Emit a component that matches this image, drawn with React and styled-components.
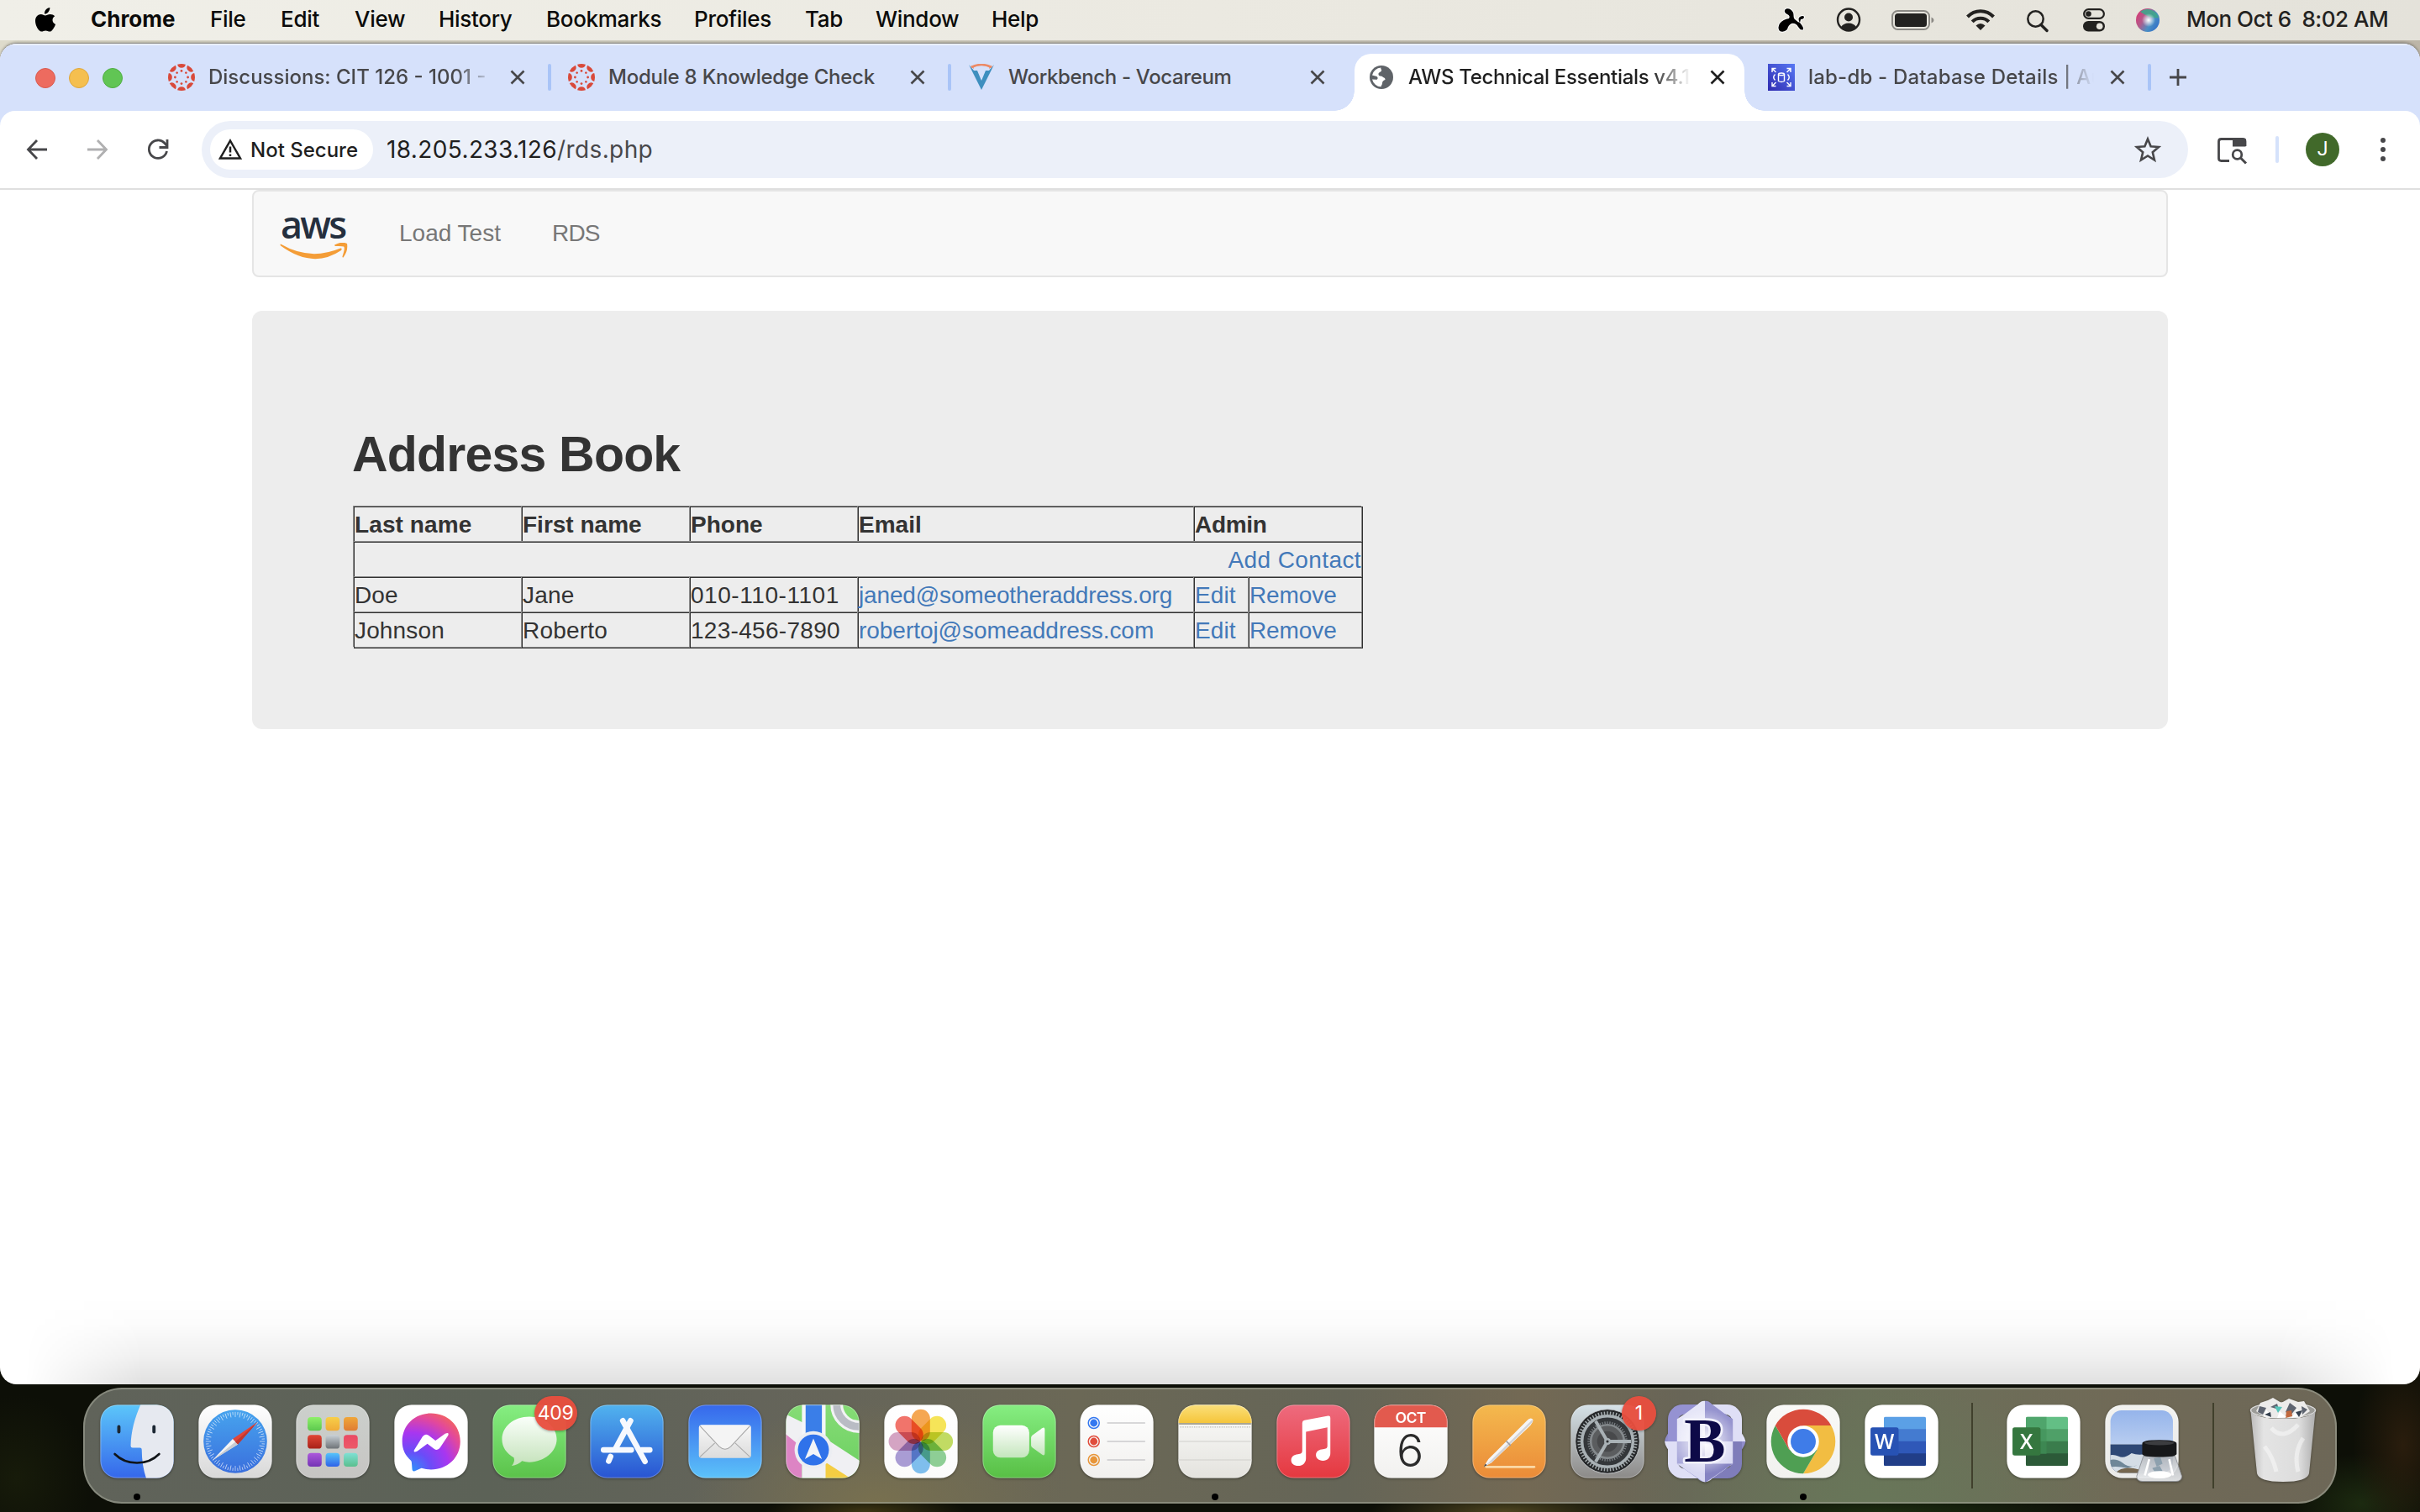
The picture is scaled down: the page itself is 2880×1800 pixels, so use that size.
import React from 'react';
import styled, { createGlobalStyle, css } from 'styled-components';

const Global = createGlobalStyle`
  * { box-sizing: border-box; }
  body { margin: 0; background: #0e0f08; overflow: hidden; }
`;

const ui = '"Inter", "Roboto", sans-serif';
const web = '"Liberation Sans", Arial, sans-serif';

const Screen = styled.div`
  width: 2880px;
  height: 1800px;
  display: flex;
  flex-direction: column;
  overflow: hidden;
  background:
    radial-gradient(ellipse 160px 24px at 1790px 1799px, #4d4420 0, transparent 100%),
    radial-gradient(ellipse 120px 20px at 1030px 1799px, #3c3413 0, transparent 100%),
    radial-gradient(ellipse 260px 24px at 2240px 1800px, #1c2c10 0, transparent 100%),
    radial-gradient(ellipse 60px 110px at 2860px 1720px, #2a1d0d 0, transparent 100%),
    radial-gradient(ellipse 90px 60px at 2810px 1790px, #1c2a10 0, transparent 100%),
    radial-gradient(ellipse 90px 100px at 20px 1760px, #171b0a 0, transparent 100%),
    linear-gradient(90deg, #dedbcb 0, #ccc8ba 50%, #bdb6a8 100%) 0 0 / 100% 90px no-repeat,
    #0d0f07;
  font-family: ${ui};
`;

/* ---------- menu bar ---------- */
const MenuBar = styled.header`
  flex: none;
  height: 48px;
  display: flex;
  align-items: center;
  justify-content: space-between;
  padding: 0 37px 0 40px;
  background: linear-gradient(90deg, #f0efe8, #ebe9e1 50%, #e4e2da);
`;
const MenuGroup = styled.nav`
  display: flex;
  align-items: center;
  height: 48px;
`;
const AppleMark = styled.svg`
  width: 28px;
  height: 32px;
  margin: 0 40px 2px 0;
`;
const MenuItem = styled.span`
  width: ${p => p.$w}px;
  height: 48px;
  margin-right: 42px;
  font-size: 26px;
  font-weight: ${p => (p.$bold ? 700 : 500)};
  letter-spacing: ${p => p.$ls || 0}px;
  line-height: 45px;
  white-space: nowrap;
  color: #0b0b0a;
`;
const StatusIcon = styled.svg`
  width: ${p => p.$w}px;
  height: 32px;
  margin-right: ${p => p.$mr}px;
  overflow: visible;
`;
const Clock = styled.span`
  width: 241px;
  height: 48px;
  font-size: 26px;
  font-weight: 500;
  line-height: 45px;
  letter-spacing: -0.5px;
  white-space: pre;
  color: #232220;
`;

/* ---------- browser window ---------- */
const Window = styled.main`
  position: relative;
  flex: none;
  height: 1596px;
  margin-top: 4px;
  display: flex;
  flex-direction: column;
  background: #fff;
  border-radius: 20px;
  overflow: hidden;
  box-shadow: 0 -1px 0 #96948f, 0 -2px 3px rgba(0, 0, 0, 0.25);
`;
const TabStrip = styled.div`
  flex: none;
  height: 98px;
  margin-bottom: -18px;
  padding: 12px 0 18px 42px;
  display: flex;
  background: #d6e1fb;
  box-shadow: inset 0 2px 0 #e9effc;
`;
const Lights = styled.div`
  display: flex;
  align-items: center;
  gap: 16px;
  height: 57px;
  margin-right: 38px;
`;
const Light = styled.i`
  width: 24px;
  height: 24px;
  border-radius: 50%;
  background: ${p => p.$c};
  border: 1px solid ${p => p.$b};
`;
const Tab = styled.div`
  position: relative;
  flex: none;
  width: 464px;
  height: 68px;
  padding: 0 16px 12px;
  display: flex;
  align-items: center;
  color: #47474a;
  ${p => p.$active && css`
    background: #fff;
    border-radius: 20px 20px 0 0;
    color: #1f1f1f;
    &::before, &::after {
      content: '';
      position: absolute;
      bottom: 0;
      width: 24px;
      height: 24px;
    }
    &::before {
      left: -24px;
      background: radial-gradient(circle at 0 0, transparent 23.5px, #fff 24px);
    }
    &::after {
      right: -24px;
      background: radial-gradient(circle at 100% 0, transparent 23.5px, #fff 24px);
    }
  `}
`;
const Favicon = styled.svg`
  flex: none;
  width: 32px;
  height: 32px;
  margin-right: 16px;
`;
const TabTitle = styled.span`
  flex: none;
  width: 352px;
  font-size: 24px;
  font-weight: 450;
  line-height: 40px;
  letter-spacing: ${p => p.$ls || 0}px;
  white-space: nowrap;
  ${p => p.$fade && css`
    mask-image: linear-gradient(90deg, #000 ${p.$fade - 46}px, transparent ${p.$fade}px);
  `}
`;
const CloseIcon = styled.svg`
  flex: none;
  width: 32px;
  height: 32px;
`;
const TabGap = styled.i`
  flex: none;
  width: 4px;
  height: 32px;
  margin: 12px 4px 0;
  border-radius: 2px;
  background: ${p => (p.$hidden ? 'transparent' : '#a9c4f7')};
`;
const NewTab = styled.svg`
  width: 32px;
  height: 32px;
  margin: 12px 0 0 12px;
`;
const Toolbar = styled.div`
  position: relative;
  flex: none;
  height: 94px;
  padding: 0 28px;
  display: flex;
  align-items: center;
  background: #fff;
  border-radius: 18px 18px 0 0;
  border-bottom: 2px solid #dfdfdf;
`;
const NavButtons = styled.div`
  display: flex;
  gap: 40px;
  margin-right: 36px;
`;
const Icon32 = styled.svg`
  flex: none;
  width: 32px;
  height: 32px;
`;
const Omnibox = styled.div`
  width: 2364px;
  height: 68px;
  padding: 0 30px 0 10px;
  display: flex;
  align-items: center;
  border-radius: 34px;
  background: #ecf0f9;
`;
const SecurityChip = styled.div`
  width: 194px;
  height: 48px;
  padding-left: 8px;
  display: flex;
  align-items: center;
  gap: 8px;
  border-radius: 24px;
  background: #fff;
  font-size: 24px;
  font-weight: 500;
  letter-spacing: 0;
  white-space: nowrap;
  color: #1f1f1f;
`;
const Url = styled.div`
  flex: 1;
  margin-left: 16px;
  font-size: 28px;
  letter-spacing: 0.38px;
  color: #1f1f1f;
  span { color: #47474a; }
`;
const StarIcon = styled.svg`
  width: 36px;
  height: 36px;
`;
const PanelIcon = styled.svg`
  width: 40px;
  height: 36px;
  margin-left: 33px;
`;
const ToolDivider = styled.i`
  width: 4px;
  height: 32px;
  margin: 0 32px 0 31px;
  border-radius: 2px;
  background: #d5e2fb;
`;
const Avatar = styled.div`
  width: 40px;
  height: 40px;
  border-radius: 50%;
  background: #41692a;
  color: #fff;
  font: 400 23px/40px "Roboto", sans-serif;
  text-align: center;
`;
const MoreIcon = styled.svg`
  width: 32px;
  height: 32px;
  margin-left: 36px;
`;

/* ---------- web page ---------- */
const Page = styled.div`
  flex: 1;
  width: 2280px;
  margin: 0 auto;
  font-family: ${web};
  font-size: 28px;
  color: #333;
`;
const Navbar = styled.nav`
  height: 104px;
  display: flex;
  align-items: center;
  border: 2px solid #e5e5e5;
  border-radius: 8px;
  background: #f8f8f8;
  padding-left: 31px;
`;
const AwsLogo = styled.div`
  width: 81px;
  height: 58px;
  margin: 4px 61px 0 0;
  display: flex;
  flex-direction: column;
  span {
    height: 38px;
    padding-left: 1px;
    font: 600 45px/32px "Open Sans", "Noto Sans", sans-serif;
    letter-spacing: -2.8px;
    color: #252f3e;
  }
  svg { width: 81px; height: 20px; }
`;
const NavLink = styled.a`
  width: ${p => p.$w}px;
  margin-right: 60px;
  white-space: nowrap;
  letter-spacing: ${p => p.$ls || 0}px;
  color: #777;
`;
const Jumbotron = styled.section`
  height: 498px;
  margin-top: 40px;
  padding: 138px 120px 0 119px;
  border-radius: 12px;
  background: #ededed;
`;
const Heading = styled.h1`
  margin: 0 0 62px;
  font-size: 59px;
  font-weight: 700;
  line-height: 66px;
  letter-spacing: -0.8px;
  height: 33px;
  color: #333;
`;
const Contacts = styled.div`
  width: 1201px;
  margin: 0 0 0 2px;
  display: grid;
  grid-template-columns: 200px 200px 200px 400px 65px 135px;
  grid-auto-rows: 42px;
  border-right: 1px solid #303030;
  border-bottom: 1px solid #303030;
  box-shadow: inset -1px -1px 0 #8b8b8b;
`;
const Cell = styled.div`
  grid-column: span ${p => p.$span || 1};
  border-top: 1px solid #303030;
  border-left: 1px solid #303030;
  box-shadow: -1px -1px 0 #8b8b8b;
  line-height: 42px;
  white-space: nowrap;
  font-weight: ${p => (p.$head ? 700 : 400)};
  text-align: ${p => (p.$right ? 'right' : 'left')};
  letter-spacing: ${p => p.$ls || 0}px;
  padding-right: 1px;
`;
const Link = styled.a`
  color: #4379b9;
`;
const DockShade = styled.div`
  position: absolute;
  left: 0;
  right: 0;
  bottom: 0;
  height: 104px;
  background: linear-gradient(180deg, rgba(0,0,0,0), rgba(0,0,0,0.012) 30%, rgba(0,0,0,0.06) 68%, rgba(0,0,0,0.12));
  mask-image: linear-gradient(90deg, transparent 30px, #000 170px, #000 2710px, transparent 2850px);
`;

/* ---------- dock ---------- */
const Dock = styled.footer`
  flex: none;
  width: 2682px;
  height: 138px;
  margin: 4px auto 0;
  padding: 18px 17px 0 18px;
  display: flex;
  gap: 28.65px;
  border: 2px solid rgba(160, 163, 148, 0.6);
  border-radius: 46px;
  background:
    radial-gradient(ellipse 300px 130px at 2130px 130px, #687659, transparent),
    radial-gradient(ellipse 220px 120px at 945px 138px, #78704f, transparent),
    linear-gradient(90deg, #60635a, #5c6257 18%, #64645a 30%, #6b6856 44%, #656557 56%, #736954 64%, #686557 71%, #6a7059 79%, #706a57 90%, #6d6757);
  background-origin: border-box;
`;
const DockItem = styled.div`
  position: relative;
  flex: none;
  width: ${p => p.$w || 88}px;
  height: 88px;
`;
const AppIcon = styled.svg`
  display: block;
  width: 100%;
  height: 100%;
  overflow: visible;
  filter: drop-shadow(0 1px 1.5px rgba(0, 0, 0, 0.35));
`;
const RunningDot = styled.i`
  position: absolute;
  left: 40px;
  top: 106px;
  width: 8px;
  height: 8px;
  border-radius: 50%;
  background: #000;
`;
const Badge = styled.span`
  position: absolute;
  top: -10px;
  left: ${p => p.$left}px;
  width: ${p => p.$w}px;
  height: 41px;
  border-radius: 21px;
  background: rgba(232, 78, 62, 0.96);
  box-shadow: 0 1px 3px rgba(0, 0, 0, 0.35);
  color: #fff;
  font-size: 23px;
  line-height: 41px;
  letter-spacing: -0.4px;
  text-align: center;
`;
const DockDivider = styled.i`
  flex: none;
  width: 2px;
  height: 102px;
  margin: -2px 11.3px 0;
  background: #40402c;
`;

/* ---------- favicons ---------- */
const CanvasFavicon = () => (
  <Favicon viewBox="-16 -16 32 32">
    {[0, 45, 90, 135, 180, 225, 270, 315].map(a => (
      <g key={a} transform={`rotate(${a})`} fill="#d9493a">
        <path d="M-4.9-15.2A16 16 0 0 1 4.9-15.2A5 5 0 0 1-4.9-15.2Z" />
        <circle cy="-7.6" r="1.4" />
      </g>
    ))}
  </Favicon>
);
const VocareumFavicon = () => (
  <Favicon viewBox="0 0 32 32">
    <path d="M1 1 16 31 31 1 25 8 21 8 16 20 11 8 7 8Z" fill="#3e8fbf" />
    <path d="M4 4Q16-2 28 4" fill="none" stroke="#ec8a66" strokeWidth="2.6" />
    <path d="M3 3l3-1 1 4zM29 3l-3-1-1 4z" fill="#ec8a66" />
  </Favicon>
);
const GlobeFavicon = () => (
  <Favicon viewBox="0 0 32 32">
    <circle cx="16" cy="16" r="14" fill="#5f6368" />
    <path d="M15.5 4.5c-1 2 2 2.500 0 4.500-1.500 1.500-3 1-3 3.500s3.500 1.500 5 3c1.500 1.500 3 .5 3 3.500-2 .5-3.500 2-3.500 4 0 2-1 2-1.500 4.300A11.500 11.500 0 0 1 5 18.500l5 .3c2 0 2-3 .5-3.800L5 13.500A11.500 11.500 0 0 1 15.500 4.500z" fill="#fff" />
    <path d="M22 7l3.500 4-3 2.500-3.500-2z" fill="#5f6368" />
  </Favicon>
);
const RdsFavicon = () => (
  <Favicon viewBox="0 0 32 32">
    <defs>
      <linearGradient id="rds" x1="0" y1="1" x2="1" y2="0">
        <stop offset="0" stopColor="#2f2bb0" />
        <stop offset="1" stopColor="#5878f4" />
      </linearGradient>
    </defs>
    <path d="M0 0h32v32H0z" fill="url(#rds)" />
    <g fill="none" stroke="#fff" strokeWidth="1.4">
      <path d="M5 10V5.500h4.500M5.500 6l4 4M27 10V5.500h-4.500M26.500 6l-4 4M5 22v4.500h4.500M5.500 26l4-4M27 22v4.500h-4.500M26.500 26l-4-4" />
      <path d="M12.500 12.500v8q3.500 2 7 0v-8" />
      <ellipse cx="16" cy="12.300" rx="3.500" ry="1.300" />
      <path d="M8.500 12.500q-3.500 3.500 0 7M23.500 12.500q3.500 3.500 0 7" />
    </g>
  </Favicon>
);
const Close = ({ color = '#47474a' }) => (
  <CloseIcon viewBox="0 0 32 32">
    <path d="M8.500 8.500l15 15M23.500 8.500l-15 15" stroke={color} strokeWidth="2.6" />
  </CloseIcon>
);

/* ---------- dock icons ---------- */
const Grad = ({ id, a, b }) => (
  <linearGradient id={id} x1="0" y1="0" x2="0" y2="1">
    <stop offset="0" stopColor={a} />
    <stop offset="1" stopColor={b} />
  </linearGradient>
);
const Plate = ({ id, a, b, children }) => (
  <AppIcon viewBox="0 0 100 100">
    <defs>
      <Grad id={id} a={a} b={b} />
      <clipPath id={`${id}-clip`}><rect x=".5" y=".5" width="99" height="99" rx="23" /></clipPath>
    </defs>
    <rect x=".5" y=".5" width="99" height="99" rx="23" fill={`url(#${id})`} />
    {children}
    <rect x="1" y="1" width="98" height="98" rx="22.500" fill="none" stroke="#fff" strokeOpacity=".35" />
  </AppIcon>
);
const ticks = (n, r1, r2, props, turn = 0) =>
  Array.from({ length: n }, (_, i) => (
    <path key={i} d={`M50 ${50 - r1}V${50 - r2}`} transform={`rotate(${(360 / n) * i + turn} 50 50)`} {...props} />
  ));

const Finder = () => (
  <Plate id="finder" a="#5cc6fa" b="#3567ea">
    <g clipPath="url(#finder-clip)">
      <path d="M55 0C47 18 42 36 41.500 56Q41.500 58.500 44 58.500H54Q56.500 58.500 56.500 61Q56.500 82 62.500 100H100V0Z" fill="#e6e9f0" />
    </g>
    <path d="M25.500 30v7M73 30v7" stroke="#1c2733" strokeWidth="4.400" strokeLinecap="round" />
    <path d="M20 67Q32 79 50 79T80 67" fill="none" stroke="#101418" strokeWidth="3" strokeLinecap="round" />
  </Plate>
);
const Safari = () => (
  <Plate id="safari" a="#ffffff" b="#d8d8d8">
    <defs><Grad id="safari-dial" a="#47a4ee" b="#3a6fdd" /></defs>
    <circle cx="50" cy="50" r="43" fill="url(#safari-dial)" />
    {ticks(36, 40, 33, { stroke: '#fff', strokeOpacity: 0.75, strokeWidth: 0.9 })}
    {ticks(36, 40, 36, { stroke: '#fff', strokeOpacity: 0.75, strokeWidth: 0.9 }, 5)}
    <path d="M80 24 46.500 46.500 53.500 54Z" fill="#e0453a" />
    <path d="M19 75.500 46.500 46.500 53.500 54Z" fill="#f4f4f4" />
    <path d="M19 75.500 50 50.500 53.500 54Z" fill="#c8ccd2" />
    <path d="M80 24 50 50.500 53.500 54Z" fill="#bf3830" />
  </Plate>
);
const tiles = [
  ['#8ff06a', '#5cc84e'], ['#f7cf49', '#f0ab38'], ['#efa73a', '#e07c34'],
  ['#e04636', '#a82118'], ['#c8d0d6', '#6e7377'], ['#ea4a64', '#ec5a68'],
  ['#ad59dc', '#7434b4'], ['#54c4fa', '#2f62e8'], ['#7fe0d4', '#5abf8e'],
];
const Launchpad = () => (
  <Plate id="launchpad" a="#ccd0cc" b="#c6c5c3">
    {tiles.map(([a, b], i) => (
      <g key={a}>
        <defs><Grad id={`tile${i}`} a={a} b={b} /></defs>
        <rect x={16 + (i % 3) * 24.400} y={17 + Math.floor(i / 3) * 24.300} width="19" height="18.500" rx="4.500" fill={`url(#tile${i})`} />
      </g>
    ))}
  </Plate>
);
const Messenger = () => (
  <Plate id="messenger" a="#ffffff" b="#ffffff">
    <defs>
      <radialGradient id="messenger-fill" cx=".15" cy="1" r="1.150">
        <stop offset="0" stopColor="#2b96fa" />
        <stop offset=".3" stopColor="#6a4cf8" />
        <stop offset=".58" stopColor="#a836f0" />
        <stop offset=".82" stopColor="#e2489c" />
        <stop offset="1" stopColor="#f4655c" />
      </radialGradient>
    </defs>
    <path d="M50 12C28 12 11 28 11 50C11 61 15 69 23 76C24 77 24 82 24.500 88Q25 91 28 90L37 86Q43 88 50 88C72 88 89.500 72 89.500 50S72 12 50 12Z" fill="url(#messenger-fill)" />
    <path d="M27 62 38.500 43.500Q42 38.500 47 42L56 49 69 39.500Q75 37 73 42L62.500 58Q59 63.500 54 60L45 53 31.500 63Q26 66 27 62Z" fill="#fff" />
  </Plate>
);
const Messages = () => (
  <Plate id="messages" a="#86ee82" b="#5bc24a">
    <defs><Grad id="bubble" a="#fafffa" b="#c4e2ba" /></defs>
    <path d="M50 16.500C29 16.500 13 30 13 47C13 58 19 66 29 72Q31 78 26 83Q35 82 40 76.500Q45 78 50 78C70 78 87 64 87 47S70 16.500 50 16.500Z" fill="url(#bubble)" />
  </Plate>
);
const AppStore = () => (
  <Plate id="appstore" a="#51b3ef" b="#2954d2">
    <g stroke="#f6f9fe" strokeWidth="7.600" strokeLinecap="round">
      <path d="M44.500 22 74.500 77" />
      <path d="M55 22 34.500 60" />
      <path d="M18.500 61.500H56M70 61.500H81" />
      <path d="M28 70.500 25.500 76.500" />
    </g>
  </Plate>
);
const Mail = () => (
  <Plate id="mail" a="#3668ec" b="#5cc2f9">
    <defs><Grad id="envelope" a="#f8f8f8" b="#dcdcdc" /></defs>
    <rect x="14.500" y="27.500" width="70.500" height="45" rx="4" fill="url(#envelope)" />
    <path d="M16 71 36 52M83.500 71 63.500 52" stroke="#aaa" strokeWidth="1.200" />
    <path d="M16 29 42 57Q50 64 57.500 57L83.500 29" fill="#f4f4f4" stroke="#a6a6a6" strokeWidth="1.200" />
  </Plate>
);
const Maps = () => (
  <Plate id="maps" a="#86dc76" b="#6bcf60">
    <g clipPath="url(#maps-clip)">
      <path d="M0 38 22 56V100H0Z" fill="#dd84c4" />
      <path d="M52 76 90 100H50Z" fill="#f4cd43" />
      <path d="M0 13 22 24 60 50 100 76V100H88L54 78V100H22V58L0 40Z" fill="#f0f0f3" />
      <path d="M22 0H54V45H22Z" fill="#f4f6f8" />
      <path d="M27 0H49V45H27Z" fill="#3a7ee8" />
      <circle cx="99" cy="0" r="30" fill="none" stroke="#f2f2f4" strokeWidth="17" />
      <circle cx="99" cy="0" r="30" fill="none" stroke="#b9bcc4" strokeWidth="10" />
    </g>
    <circle cx="37.500" cy="61.500" r="25.500" fill="#eceef2" />
    <circle cx="37.500" cy="61.500" r="21" fill="#2f72ea" />
    <path d="M37.500 46 49 74 37.500 67 26 74Z" fill="#f2f4f8" />
  </Plate>
);
const petals = ['#f4a044', '#f5e24a', '#bcd856', '#84ca8c', '#74b8ec', '#a294d0', '#d09cbe', '#f0685e'];
const Photos = () => (
  <Plate id="photos" a="#ffffff" b="#fbfbfb">
    <g style={{ isolation: 'isolate' }}>
      {petals.map((c, i) => (
        <rect key={c} x="37.300" y="6.500" width="25" height="43" rx="12.500" fill={c} fillOpacity=".92" transform={`rotate(${i * 45} 49.800 50)`} style={{ mixBlendMode: 'multiply' }} />
      ))}
    </g>
  </Plate>
);
const FaceTime = () => (
  <Plate id="facetime" a="#86ee82" b="#58bf45">
    <defs><Grad id="camera" a="#ffffff" b="#c4e6bc" /></defs>
    <rect x="14.500" y="28" width="49" height="44" rx="10" fill="url(#camera)" />
    <path d="M66 45Q66 43 68 41.500L81 32Q84.500 30 84.500 34V66Q84.500 70 81 68L68 58.500Q66 57 66 55Z" fill="url(#camera)" />
  </Plate>
);
const Reminders = () => (
  <Plate id="reminders" a="#ffffff" b="#f1f0ee">
    {[['#3478f0', 25], ['#e04c3c', 50], ['#e8963a', 75]].map(([c, y]) => (
      <g key={c}>
        <circle cx="19" cy={y} r="7.400" fill="none" stroke={c} strokeWidth="1.700" />
        <circle cx="19" cy={y} r="5" fill={c} />
        <path d={`M37 ${y}H88.500`} stroke="#b4b4b8" strokeWidth="1.400" />
      </g>
    ))}
  </Plate>
);
const Notes = () => (
  <Plate id="notes" a="#fcfcfb" b="#e4e3de">
    <g clipPath="url(#notes-clip)">
      <defs><Grad id="notes-top" a="#fbe07c" b="#f5c53a" /></defs>
      <path d="M0 0H100V25H0Z" fill="url(#notes-top)" />
      <path d="M0 26.200H100" stroke="#aaa592" strokeWidth="2.200" />
      <path d="M3 30.500H98" stroke="#b9b9b4" strokeWidth="1.600" strokeDasharray="1.500 1.600" />
      <path d="M0 50H100M0 75H100" stroke="#cfcfcc" strokeWidth="1.400" />
    </g>
  </Plate>
);
const Music = () => (
  <Plate id="music" a="#ee6b7e" b="#e5383f">
    <path d="M35 25Q35 22 38 21.300L70 15.300Q73 15 73 18V66C73 72 69 76 63 76C57 76 53.500 72.500 53.500 68.500C53.500 63 58 61 63 60.500C67 60 69 59.500 69 56V31L40 37V73C40 79 35.500 83 29.500 83C23.500 83 20 79.500 20 75.500C20 70 24 68 29 67.300C33.500 66.800 35 66 35 62Z" fill="#fff" />
  </Plate>
);
const Calendar = () => (
  <Plate id="calendar" a="#ffffff" b="#f2f1ef">
    <g clipPath="url(#calendar-clip)"><path d="M0 0H100V31H0Z" fill="#e25a4e" /></g>
    <text x="50" y="24.500" textAnchor="middle" fill="#fff" fontFamily="Inter" fontWeight="600" fontSize="20" textLength="42">OCT</text>
    <text x="49" y="84" textAnchor="middle" fill="#2b2b2b" fontFamily="Inter" fontWeight="300" fontSize="61">6</text>
  </Plate>
);
const Pages = () => (
  <Plate id="pages" a="#f4b94e" b="#eb8b38">
    <path d="M19 84.500H84" stroke="#fbd9a6" strokeWidth="3" strokeLinecap="round" />
    <path d="M81.500 19.500Q78 17 74 22L22 74 15.500 84.500 26 79 79 28Q84 22 81.500 19.500Z" fill="#f5f5f5" />
    <path d="M81.500 20.500 81.500 24 28 77 16 84.500 24 77Z" fill="#d2d2d6" />
    <path d="M46 49.500 52 55.500" stroke="#9a9aa0" strokeWidth="1.800" />
    <path d="M15.500 84.500 18 80 20 82.200Z" fill="#444" />
  </Plate>
);
const Settings = () => (
  <Plate id="settings" a="#d6e2e8" b="#8c8a88">
    <circle cx="50" cy="50" r="43.500" fill="#26282a" />
    <circle cx="50" cy="50" r="43.500" fill="none" stroke="#c6cacc" strokeWidth="1" />
    {ticks(60, 40.5, 36, { stroke: '#a4abae', strokeWidth: 1.7 })}
    <circle cx="50" cy="50" r="34.500" fill="#34373a" stroke="#a9b1b5" strokeWidth="4" />
    {ticks(48, 27, 24, { stroke: '#80868a', strokeWidth: 1.3 })}
    <circle cx="50" cy="50" r="22.500" fill="#5b5d5f" stroke="#84898c" strokeWidth="3" />
    <circle cx="50" cy="50" r="14" fill="#48494b" />
    <path d="M50 50H82M50 50 34 22.500M50 50 34 77.500" stroke="#a9b1b5" strokeWidth="4.500" />
    <circle cx="50" cy="50" r="4.500" fill="#a9b1b5" />
    <circle cx="50" cy="50" r="1.800" fill="#2c2e30" />
  </Plate>
);
const BBEdit = () => (
  <AppIcon viewBox="0 0 100 100">
    <defs>
      <clipPath id="bb-frame"><rect width="100" height="100" rx="20" /></clipPath>
      <clipPath id="bb-gem"><path d="M50-5Q55-5 60 0L76 12 88 20V80L60 100Q55 105 50 105T40 100L12 80V20L24 12 40 0Q45-5 50-5Z" /></clipPath>
      <radialGradient id="bb-glow"><stop offset="0" stopColor="#fff" /><stop offset="1" stopColor="#fff" stopOpacity="0" /></radialGradient>
    </defs>
    <path d="M8 30Q-4 42-4.500 50H8ZM92 70Q104 58 105 50H92Z" fill="#8f8cca" />
    <path d="M8 70Q-4 58-4.500 50H8ZM92 30Q104 42 105 50H92Z" fill="#e2e2f8" />
    <g clipPath="url(#bb-frame)">
      <path d="M0 0H50V50H0Z" fill="#9592d2" />
      <path d="M50 0H100V50H50ZM0 50H50V100H0Z" fill="#dfdff6" />
      <path d="M50 50H100V100H50Z" fill="#7f7dba" />
    </g>
    <rect x="13" y="13" width="74" height="74" rx="10" fill="#55564e" />
    <g clipPath="url(#bb-gem)">
      <path d="M10-6H50V50H10Z" fill="#e6e6f8" />
      <path d="M50-6H90V50H50Z" fill="#9694cf" />
      <path d="M10 50H50V106H10Z" fill="#a9a8da" />
      <path d="M50 50H90V106H50Z" fill="#d9d9f3" />
      <path d="M12 80 50 106V80Z" fill="#d9d9f3" />
      <path d="M88 80 50 106V80Z" fill="#8583c2" />
      <circle cx="50" cy="50" r="44" fill="url(#bb-glow)" />
    </g>
    <text x="50" y="77.500" textAnchor="middle" fontFamily="Liberation Serif" fontWeight="700" fontSize="84" fill="#0d0a48" stroke="#f1f1fc" strokeWidth="6" paintOrder="stroke" strokeLinejoin="round">B</text>
  </AppIcon>
);
const Chrome = () => (
  <Plate id="chrome" a="#f9f9f7" b="#f1f1ee">
    <path d="M50 50 12.300 28.300A43.500 43.500 0 0 1 87.700 28.300Z" fill="#d94c3c" />
    <path d="M50 28.300H87.700A43.500 43.500 0 0 1 50 93.500L69 61Z" fill="#f2bd42" />
    <path d="M31 61 12.300 28.300A43.500 43.500 0 0 0 50 93.500L69 61Z" fill="#4f9f53" />
    <path d="M12.300 28.300 31 61 50 50V28.300Z" fill="#d94c3c" />
    <circle cx="50" cy="50" r="21.300" fill="#fff" />
    <circle cx="50" cy="50" r="17" fill="#3f7ce8" />
  </Plate>
);
const Office = ({ id, letter, rows, badge, dark }) => (
  <Plate id={id} a="#ffffff" b="#ffffff">
    <defs><clipPath id={`${id}-doc`}><rect x="26" y="16.500" width="57" height="66.500" rx="2.500" /></clipPath></defs>
    <g clipPath={`url(#${id}-doc)`}>
      {rows.map((c, i) => <path key={i} d={`M26 ${16.5 + i * 16.6}H83V84H26Z`} fill={c} />)}
      {dark && <path d="M26 16.500H54V67H26Z" fill={dark} fillOpacity=".55" />}
    </g>
    <rect x="8" y="31" width="38" height="38" rx="3" fill={badge} />
    <text x="27" y="60" textAnchor="middle" fill="#fff" fontFamily="Open Sans" fontWeight="600" fontSize="28">{letter}</text>
  </Plate>
);
const Preview = () => (
  <Plate id="preview" a="#f2f2f0" b="#e9e9e8">
    <defs>
      <Grad id="sky" a="#8fb0ea" b="#b8cdf0" />
      <Grad id="glass" a="#b9bdc2" b="#e9ebee" />
      <clipPath id="photo"><rect x="7.500" y="8" width="84.500" height="84.500" rx="15" /></clipPath>
    </defs>
    <g clipPath="url(#photo)">
      <path d="M0 0H100V54H0Z" fill="url(#sky)" />
      <path d="M0 54H100V100H0Z" fill="#2e4876" />
      <path d="M0 71Q10 66 18 70T36 66Q46 70 60 66V100H0Z" fill="#d4dde6" />
      <path d="M0 77Q14 71 24 79T44 82L30 86Q14 82 0 86Z" fill="#6f8798" />
      <path d="M14 93Q24 82 46 88V96H14Z" fill="#75664f" />
    </g>
    <path d="M52 70 43 97Q43 104 51 104H96Q104 104 104 97L95 70Z" fill="url(#glass)" fillOpacity=".93" stroke="#8d9196" strokeWidth="1" />
    <path d="M60 74 54 96M87 74 92 96" stroke="#fff" strokeWidth="3" />
    <path d="M66 73l9-2 3 9-8 4zM64 86l10-3 4 7-10 2z" fill="#8da0ae" />
    <ellipse cx="74" cy="95" rx="16" ry="5" fill="#fff" />
    <path d="M50.500 53Q50 48 73.500 48T97 53V67Q96 71 73.500 71T50.500 67Z" fill="#17181a" />
    <ellipse cx="73.500" cy="52" rx="20" ry="3" fill="#3c3d40" />
  </Plate>
);
const Trash = () => (
  <AppIcon viewBox="0 0 84 88">
    <defs>
      <linearGradient id="bin" x1="0" x2="1" y1="0" y2="0">
        <stop offset="0" stopColor="#bfbfbf" />
        <stop offset=".2" stopColor="#e9e9e9" />
        <stop offset=".75" stopColor="#e2e2e2" />
        <stop offset="1" stopColor="#b2b2b2" />
      </linearGradient>
    </defs>
    <ellipse cx="42" cy="7" rx="38.500" ry="9" fill="#9c9c98" stroke="#dcdcdc" strokeWidth="1.500" />
    <path d="M10 8 15-2 24-5 30-8 40-2 49-7 60-3 67-4 74 8 62 16H22Z" fill="#ecebea" />
    <path d="M14 2l8 2-4 8-6-3zM50-2l8 6-7 9-6-4zM27 3l8-4 2 7zM64 2l7 4-6 6z" fill="#5e6470" />
    <path d="M32 2l9 1-5 7z" fill="#58c4ba" />
    <path d="M46 8l6-1 1 7-8 2z" fill="#c0683e" />
    <path d="M22 6l7 9-10-1zM38 8l8 7-11 1zM59 5l2 9-9 2z" fill="#fff" />
    <path d="M20 12l7-3 1 6zM57 9l8-2-4 8z" fill="#36404e" />
    <path d="M3.500 8Q10 17 42 17T80.500 8L73 82Q71 92 42 92T11 82Z" fill="url(#bin)" fillOpacity=".97" />
    <path d="M28 28Q42 44 60 24M20 50Q30 62 34 80M66 40Q54 58 60 80" fill="none" stroke="#fff" strokeOpacity=".45" strokeWidth="5" />
  </AppIcon>
);

const contacts = [
  { last: 'Doe', first: 'Jane', phone: '010-110-1101', phoneLs: 0.55, email: 'janed@someotheraddress.org', emailLs: -0.15 },
  { last: 'Johnson', first: 'Roberto', phone: '123-456-7890', phoneLs: 0.3, email: 'robertoj@someaddress.com', emailLs: -0.04 },
];

const menus = [
  ['File', 42], ['Edit', 46], ['View', 58], ['History', 86], ['Bookmarks', 134],
  ['Profiles', 90], ['Tab', 42], ['Window', 96], ['Help', 56],
];

export default function App() {
  return (
    <Screen>
      <Global />
      <MenuBar>
        <MenuGroup>
          <AppleMark viewBox="0 0 28 32">
            <path d="M19.300 1c.2 2-.6 3.900-1.700 5.200-1.200 1.400-3 2.400-4.700 2.300-.2-1.900.7-3.900 1.700-5.100C15.800 2 17.800 1.100 19.300 1zM25.200 11.300c-3.900 2.400-3.400 7.800.9 9.600-.9 2.600-3.900 8.600-6.900 8.700-2 0-2.600-1.200-4.900-1.200s-3 1.200-4.900 1.200C6 29.700 2 22.500 2 17.100 2 11.800 5.400 9 8.700 9c2.100 0 3.900 1.400 5.200 1.400 1.200 0 3.300-1.500 5.900-1.500 2 0 4.100.8 5.400 2.400z" fill="#000" transform="translate(0 1)" />
          </AppleMark>
          <MenuItem $bold $w={100}>Chrome</MenuItem>
          {menus.map(([label, w]) => <MenuItem key={label} $w={w} $ls={-0.3}>{label}</MenuItem>)}
        </MenuGroup>
        <MenuGroup>
          <StatusIcon $w={32} $mr={38} viewBox="0 0 32 32">
            <g fill="#000" stroke="#fff" strokeWidth="2" paintOrder="stroke">
              <path d="M9 4C11 1 17 2 19 7C20 10 19 13 21 15Q24 18 27 19Q24 14 27 12Q31 10 32 12Q32 15 28 15L27 19Q32 25 31 27Q28 29 25 24Q22 19 17 20Q13 22 12 27Q8 31 3 29Q0 25 3 20Q7 15 14 14Q16 11 12 9Q8 7 9 4Z" />
            </g>
          </StatusIcon>
          <StatusIcon $w={30} $mr={36} viewBox="0 0 30 32">
            <circle cx="15" cy="15.500" r="13" fill="none" stroke="#232220" strokeWidth="2.400" />
            <circle cx="15" cy="12.500" r="5" fill="#232220" />
            <path d="M6 24Q9 19.500 15 19.500T24 24Q20 28.500 15 28.500T6 24Z" fill="#232220" />
          </StatusIcon>
          <StatusIcon $w={52} $mr={37} viewBox="0 0 52 32">
            <rect x="1" y="5" width="44" height="22" rx="6.500" fill="none" stroke="#8c8a85" strokeWidth="2" />
            <rect x="4" y="8" width="38" height="16" rx="3.500" fill="#232220" />
            <path d="M47.500 12.500q3 1.300 3 3.500t-3 3.500z" fill="#8c8a85" />
          </StatusIcon>
          <StatusIcon $w={34} $mr={38} viewBox="0 0 34 32">
            <g fill="none" stroke="#232220" strokeWidth="4">
              <path d="M1.500 12Q8 5.300 17 5.300T32.500 12" />
              <path d="M7.200 17.800Q11 13.700 17 13.700T26.800 17.800" />
            </g>
            <path d="M11.500 22.500Q14 20 17 20T22.500 22.500L17 28Z" fill="#232220" />
          </StatusIcon>
          <StatusIcon $w={26} $mr={40} viewBox="0 0 26 32">
            <circle cx="10.500" cy="14.500" r="9.200" fill="none" stroke="#232220" strokeWidth="2.500" />
            <path d="M17 21.500 24 28.500" stroke="#232220" strokeWidth="3.400" strokeLinecap="round" />
          </StatusIcon>
          <StatusIcon $w={28} $mr={36} viewBox="0 0 28 32">
            <rect x="2.100" y="3.100" width="23.800" height="10.800" rx="5.400" fill="none" stroke="#232220" strokeWidth="2.200" />
            <circle cx="7.500" cy="8.500" r="3.300" fill="#232220" />
            <rect x="1" y="17" width="26" height="12.500" rx="6.200" fill="#232220" />
            <circle cx="20.700" cy="23.200" r="3.800" fill="#e6e4dc" />
          </StatusIcon>
          <StatusIcon $w={28} $mr={32} viewBox="0 0 28 32">
            <defs>
              <linearGradient id="siri" x1="0" y1=".2" x2="1" y2=".8">
                <stop offset="0" stopColor="#d83a74" />
                <stop offset=".35" stopColor="#b05c8c" />
                <stop offset=".65" stopColor="#4a8fc4" />
                <stop offset="1" stopColor="#2f6cc8" />
              </linearGradient>
              <radialGradient id="siri-glow"><stop offset="0" stopColor="#fff" /><stop offset="1" stopColor="#fff" stopOpacity="0" /></radialGradient>
            </defs>
            <circle cx="14" cy="16" r="14" fill="url(#siri)" />
            <path d="M5 6A14 14 0 0 1 27 13Q18 15 5 6Z" fill="#3fa58c" fillOpacity=".9" />
            <circle cx="15" cy="16" r="8" fill="url(#siri-glow)" />
          </StatusIcon>
          <Clock>Mon Oct 6  8:02 AM</Clock>
        </MenuGroup>
      </MenuBar>

      <Window>
        <TabStrip>
          <Lights>
            <Light $c="#ed6b5f" $b="#d9594e" />
            <Light $c="#f5bf4f" $b="#dfa73b" />
            <Light $c="#61c554" $b="#4fae42" />
          </Lights>
          <Tab>
            <CanvasFavicon />
            <TabTitle $fade={340}>Discussions: CIT 126 - 1001 -</TabTitle>
            <Close />
          </Tab>
          <TabGap />
          <Tab>
            <CanvasFavicon />
            <TabTitle $ls={-0.23}>Module 8 Knowledge Check</TabTitle>
            <Close />
          </Tab>
          <TabGap />
          <Tab>
            <VocareumFavicon />
            <TabTitle $ls={-0.35}>Workbench - Vocareum</TabTitle>
            <Close />
          </Tab>
          <TabGap $hidden />
          <Tab $active>
            <GlobeFavicon />
            <TabTitle $fade={336} $ls={-0.32}>AWS Technical Essentials v4.1</TabTitle>
            <Close color="#1f1f1f" />
          </Tab>
          <TabGap $hidden />
          <Tab>
            <RdsFavicon />
            <TabTitle $fade={340} $ls={0.2}>lab-db - Database Details | Au</TabTitle>
            <Close />
          </Tab>
          <TabGap />
          <NewTab viewBox="0 0 32 32">
            <path d="M16 6v20M6 16h20" stroke="#47474a" strokeWidth="2.800" />
          </NewTab>
        </TabStrip>

        <Toolbar>
          <NavButtons>
            <Icon32 viewBox="0 0 32 32">
              <path d="M28 16H6M16 5 5.500 16 16 27" fill="none" stroke="#47474a" strokeWidth="2.800" />
            </Icon32>
            <Icon32 viewBox="0 0 32 32">
              <path d="M4 16h22M16 5l10.500 11L16 27" fill="none" stroke="#b0b0b1" strokeWidth="2.800" />
            </Icon32>
            <Icon32 viewBox="0 0 32 32">
              <path d="M26.500 18A10.700 10.700 0 1 1 24 8.500L27 12" fill="none" stroke="#47474a" strokeWidth="2.800" />
              <path d="M27 4v9.500h-9.500" fill="none" stroke="#47474a" strokeWidth="2.800" />
            </Icon32>
          </NavButtons>
          <Omnibox>
            <SecurityChip>
              <Icon32 viewBox="0 0 32 32">
                <path d="M16 5.500 28 26.500H4Z" fill="none" stroke="#1f1f1f" strokeWidth="2.500" />
                <path d="M16 12.500v7M16 21.500v2.600" stroke="#1f1f1f" strokeWidth="2.500" />
              </Icon32>
              Not Secure
            </SecurityChip>
            <Url>18.205.233.126<span>/rds.php</span></Url>
            <StarIcon viewBox="0 0 36 36">
              <path d="M18 5.500 21.600 14.300 31 15 23.800 21.200 26 30.500 18 25.500 10 30.500 12.200 21.200 5 15 14.400 14.300Z" fill="none" stroke="#47474a" strokeWidth="2.600" />
            </StarIcon>
          </Omnibox>
          <PanelIcon viewBox="0 0 40 36">
            <path d="M16 31.500H6.500Q3.500 31.500 3.500 28.500V8.500Q3.500 5.500 6.500 5.500H32Q35 5.500 35 8.500V14" fill="none" stroke="#47474a" strokeWidth="2.800" />
            <path d="M20 5h15.500v9.500H20z" fill="#47474a" />
            <circle cx="25.500" cy="24" r="5.300" fill="none" stroke="#47474a" strokeWidth="2.800" />
            <path d="M29.500 28 36 34.500" stroke="#47474a" strokeWidth="3" />
          </PanelIcon>
          <ToolDivider />
          <Avatar>J</Avatar>
          <MoreIcon viewBox="0 0 32 32">
            <g fill="#47474a">
              <circle cx="16" cy="5" r="3" />
              <circle cx="16" cy="16" r="3" />
              <circle cx="16" cy="27" r="3" />
            </g>
          </MoreIcon>
        </Toolbar>

        <Page>
          <Navbar>
            <AwsLogo>
              <span>aws</span>
              <svg viewBox="0 0 82 20">
                <path d="M1 1.500Q36 22 73 6.500Q75.500 6 74 9Q40 32 1 3.500Q0 1.500 1 1.500Z" fill="#f49d37" />
                <path d="M66 2.500Q75-2.500 81 1Q82.500 10 76.500 17.500Q75 18 75.500 16Q79 6 77 4.500Q74 3.500 67 4Q65.500 3.500 66 2.500Z" fill="#f49d37" />
              </svg>
            </AwsLogo>
            <NavLink $w={122}>Load Test</NavLink>
            <NavLink $w={60} $ls={-0.8}>RDS</NavLink>
          </Navbar>
          <Jumbotron>
            <Heading>Address Book</Heading>
            <Contacts>
              <Cell $head $ls={0.1}>Last name</Cell>
              <Cell $head>First name</Cell>
              <Cell $head>Phone</Cell>
              <Cell $head>Email</Cell>
              <Cell $head $span={2} $ls={-0.3}>Admin</Cell>
              <Cell $span={6} $right $ls={0.4}><Link>Add Contact</Link></Cell>
              {contacts.map(c => (
                <React.Fragment key={c.email}>
                  <Cell $ls={0.15}>{c.last}</Cell>
                  <Cell $ls={0.2}>{c.first}</Cell>
                  <Cell $ls={c.phoneLs}>{c.phone}</Cell>
                  <Cell $ls={c.emailLs}><Link>{c.email}</Link></Cell>
                  <Cell $ls={0.1}><Link>Edit</Link></Cell>
                  <Cell $ls={-0.1}><Link>Remove</Link></Cell>
                </React.Fragment>
              ))}
            </Contacts>
          </Jumbotron>
        </Page>
        <DockShade />
      </Window>

      <Dock>
        <DockItem><Finder /><RunningDot /></DockItem>
        <DockItem><Safari /></DockItem>
        <DockItem><Launchpad /></DockItem>
        <DockItem><Messenger /></DockItem>
        <DockItem><Messages /><Badge $left={50} $w={51}>409</Badge></DockItem>
        <DockItem><AppStore /></DockItem>
        <DockItem><Mail /></DockItem>
        <DockItem><Maps /></DockItem>
        <DockItem><Photos /></DockItem>
        <DockItem><FaceTime /></DockItem>
        <DockItem><Reminders /></DockItem>
        <DockItem><Notes /><RunningDot /></DockItem>
        <DockItem><Music /></DockItem>
        <DockItem><Calendar /></DockItem>
        <DockItem><Pages /></DockItem>
        <DockItem><Settings /><Badge $left={61} $w={41}>1</Badge></DockItem>
        <DockItem><BBEdit /></DockItem>
        <DockItem><Chrome /><RunningDot /></DockItem>
        <DockItem><Office id="word" letter="W" rows={['#5ba0e6', '#447bd0', '#2f58b8', '#213e88']} badge="#2752b4" /></DockItem>
        <DockDivider />
        <DockItem><Office id="excel" letter="X" rows={['#63bf85', '#4fa068', '#3a7c4c', '#2c5a38']} badge="#35773f" dark="#3f8f58" /></DockItem>
        <DockItem><Preview /></DockItem>
        <DockDivider />
        <DockItem $w={84}><Trash /></DockItem>
      </Dock>
    </Screen>
  );
}
